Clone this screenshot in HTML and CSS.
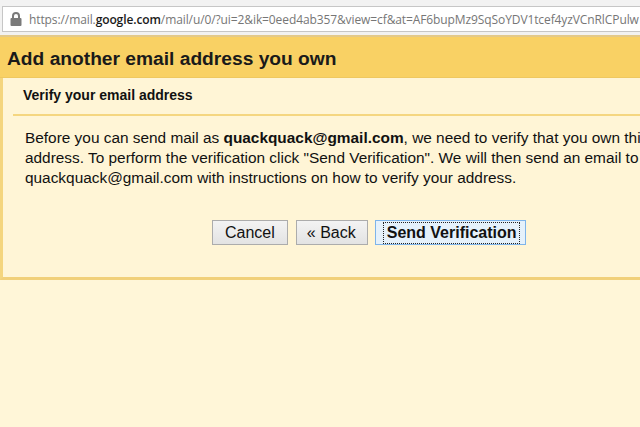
FILE: index.html
```html
<!DOCTYPE html>
<html lang="en">
<head>
  <meta charset="UTF-8">
  <title>Add another email address you own</title>
  <link rel="stylesheet" href="styles.css">
</head>
<body>
  <div class="addressbar">
    <div class="urlbox">
      <svg class="lock" width="12" height="14" viewBox="0 0 12 14">
        <path d="M3 6V4a3 3 0 0 1 6 0v2" fill="none" stroke="#7a7a7a" stroke-width="2"/>
        <rect x="0.5" y="6" width="11" height="8" rx="1" fill="#7a7a7a"/>
      </svg>
      <span class="url"><span class="scheme">https://mail.</span><span class="host">google.com</span><span class="scheme">/mail/u/0/?ui=2&amp;ik=0eed4ab357&amp;view=cf&amp;at=AF6bupMz9SqSoYDV1tcef4yzVCnRlCPulw</span></span>
    </div>
  </div>

  <div class="dialog">
    <h1 class="dialog-title">Add another email address you own</h1>
    <div class="panel">
      <h2 class="panel-title">Verify your email address</h2>
      <div class="panel-body">
        <p>Before you can send mail as <b>quackquack@gmail.com</b>, we need to verify that you own this address. To perform the verification click "Send Verification". We will then send an email to quackquack@gmail.com with instructions on how to verify your address.</p>
        <div class="buttons">
          <button>Cancel</button>
          <button class="back">&laquo; Back</button>
          <button class="primary"><span class="focus">Send Verification</span></button>
        </div>
      </div>
    </div>
  </div>
</body>
</html>
```

FILE: styles.css
```css
html, body {
  margin: 0;
  overflow: hidden;
}
body {
  background-color: #fff6d8;
  font-family: Arial, "Liberation Sans", sans-serif;
  color: #111;
}
.addressbar {
  height: 37px;
  background-color: #f2f2f2;
  border-bottom: 2px solid #e3c98a;
  padding: 6px 0 0 2px;
  box-sizing: border-box;
}
.urlbox {
  display: flex;
  align-items: center;
  height: 24px;
  background-color: #fff;
  border: 1px solid #c6c6c6;
  border-right: none;
  padding-left: 7px;
  white-space: nowrap;
  overflow: hidden;
}
.lock {
  flex-shrink: 0;
  margin-right: 7px;
}
.url {
  font-family: "Open Sans", sans-serif;
  font-size: 12px;
  letter-spacing: -0.1px;
}
.scheme {
  color: #767676;
}
.host {
  color: #1a1a1a;
  font-weight: 600;
}
.dialog {
  width: 740px;
}
.dialog-title {
  margin: 0;
  height: 40px;
  line-height: 43px;
  padding-left: 7px;
  background-color: #f9d164;
  border-bottom: 1px solid #efc860;
  font-size: 19.2px;
  font-weight: bold;
  color: #1a1a1a;
}
.panel {
  background-color: #fff5d6;
  border-left: 3px solid #f4d57e;
  border-bottom: 3px solid #f1d07a;
  height: 202px;
  box-sizing: border-box;
}
.panel-title {
  margin: 0 0 0 10px;
  height: 36px;
  line-height: 35px;
  padding-left: 10px;
  border-bottom: 2px solid #f5d680;
  font-size: 14px;
  font-weight: bold;
}
.panel-body {
  padding: 12px 0 0 22px;
}
.panel-body p {
  margin: 0;
  width: 660px;
  font-size: 15.4px;
  line-height: 20px;
}
.buttons {
  display: flex;
  gap: 8px;
  margin: 32px 0 0 187px;
}
button {
  height: 25px;
  padding: 0 12px;
  background: linear-gradient(#f3f3f3, #e3e3e3);
  border: 1px solid #acacac;
  font-family: Arial, "Liberation Sans", sans-serif;
  font-size: 16px;
  color: #111;
}
button.back {
  padding: 0 11px 0 10px;
}
button.primary {
  margin-left: -1px;
  padding: 0 5px 0 7px;
  background: #e5f1fb;
  border-color: #7eb4ea;
  font-weight: bold;
}
.focus {
  display: inline-block;
  padding: 1px 2px 1px 3px;
  border: 1px dotted #222;
}
```
